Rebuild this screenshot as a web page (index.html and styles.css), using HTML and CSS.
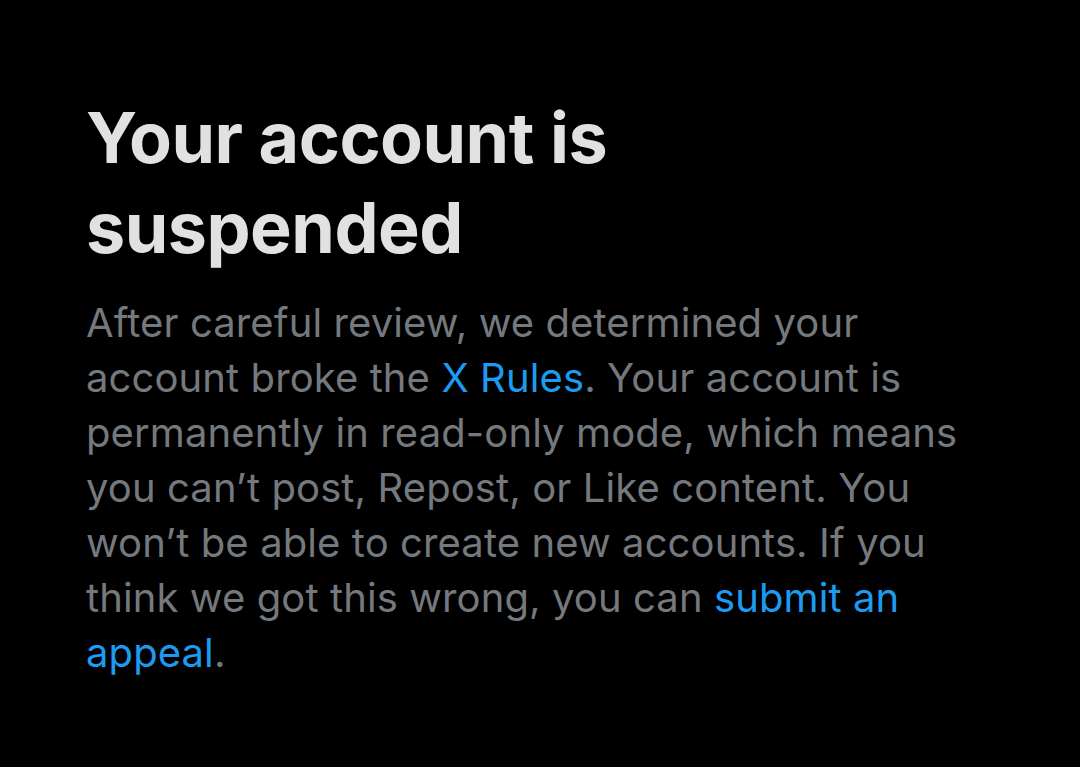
FILE: index.html
```html
<!DOCTYPE html>
<html>
<head>
<meta charset="utf-8">
<link rel="stylesheet" href="styles.css">
</head>
<body>
<main class="page">
  <h1 class="title">Your account is suspended</h1>
  <p class="body">After careful review, we determined your account broke the <a class="link" href="#">X Rules</a>. Your account is permanently in read-only mode, which means you can’t post, Repost, or Like content. You won’t be able to create new accounts. If you think we got this wrong, you can <a class="link" href="#">submit an appeal</a>.</p>
</main>
</body>
</html>
```
FILE: styles.css
```css
html, body {
  margin: 0;
  padding: 0;
  background: #000;
  height: 100%;
}
.page {
  padding: 93px 0 0 86px;
  width: 900px;
  font-family: "Inter", "Open Sans", sans-serif;
}
.title {
  margin: 0;
  width: 560px;
  font-size: 70px;
  line-height: 90px;
  font-weight: 700;
  color: #e1e1e1;
  letter-spacing: -0.5px;
}
.body {
  margin: 22px 0 0;
  font-size: 40px;
  line-height: 55px;
  color: #74797e;
  letter-spacing: 0.1px;
  width: 900px;
}
.link {
  color: #1d9bf0;
  text-decoration: none;
}
```
